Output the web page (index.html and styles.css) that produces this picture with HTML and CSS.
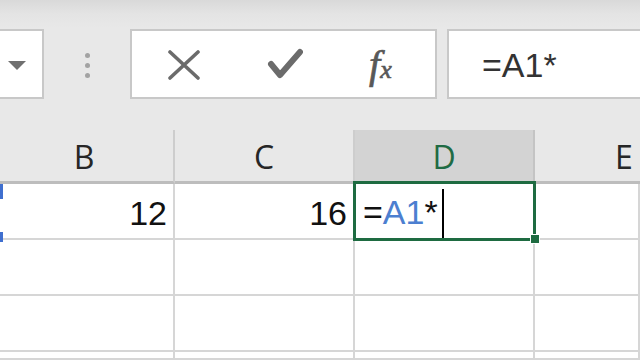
FILE: index.html
```html
<!DOCTYPE html>
<html>
<head>
<meta charset="utf-8">
<link rel="stylesheet" href="styles.css">
</head>
<body>
<div class="toolbar">
  <div class="namebox">
    <svg class="dd" width="18" height="10" viewBox="0 0 18 10"><polygon points="0,0 18,0 9,9" fill="#707070"/></svg>
  </div>
  <div class="grip"><span></span><span></span><span></span></div>
  <div class="fbtns">
    <svg class="ico" width="34" height="30" viewBox="0 0 34 30"><path d="M3 2 L31 28 M31 2 L3 28" stroke="#6b6b6b" stroke-width="3.6" stroke-linecap="round" fill="none"/></svg>
    <svg class="ico" width="36" height="32" viewBox="0 0 36 32"><path d="M4 16 L13 27 L33 4" stroke="#6b6b6b" stroke-width="6" stroke-linecap="round" stroke-linejoin="round" fill="none"/></svg>
    <span class="fx"><span class="f">f</span><span class="x">x</span></span>
  </div>
  <div class="finput">=A1*</div>
</div>
<div class="sheet">
  <div class="hdr">B</div>
  <div class="hdr">C</div>
  <div class="hdr active">D</div>
  <div class="hdr edge">E</div>

  <div class="cell num">12</div>
  <div class="cell num">16</div>
  <div class="cell edit"><span class="eq">=</span><span class="ref">A1</span><span class="eq">*</span><span class="caret"></span><span class="sel"><span class="handle"></span></span></div>
  <div class="cell"></div>

  <div class="cell"></div><div class="cell"></div><div class="cell"></div><div class="cell"></div>
  <div class="cell"></div><div class="cell"></div><div class="cell"></div><div class="cell"></div>
  <div class="cell"></div><div class="cell"></div><div class="cell"></div><div class="cell"></div>

  <div class="refmark"><span class="rm-top"></span><span class="rm-bot"></span></div>
</div>
</body>
</html>
```
FILE: styles.css
```css
html, body {
  margin: 0;
  padding: 0;
}
body {
  width: 640px;
  height: 360px;
  overflow: hidden;
  background: #ffffff;
  font-family: "Liberation Sans", Arial, sans-serif;
}
.toolbar {
  height: 130px;
  box-sizing: border-box;
  padding-top: 29px;
  display: flex;
  align-items: flex-start;
  overflow: hidden;
  background: linear-gradient(#d9d9d9 0px, #e4e4e4 14px, #e8e8e8 28px, #e8e8e8 100%);
}
.namebox {
  margin-left: -12px;
  width: 56px;
  height: 70px;
  box-sizing: border-box;
  border: 2px solid #c8c8c8;
  background: #fff;
  display: flex;
  align-items: center;
  padding-left: 18px;
  flex: none;
}
.dd {
  display: block;
  margin-top: 4px;
}
.grip {
  width: 86px;
  height: 70px;
  flex: none;
  display: flex;
  flex-direction: column;
  align-items: center;
  justify-content: center;
  gap: 5px;
  padding-top: 2px;
  box-sizing: border-box;
}
.grip span {
  width: 5px;
  height: 5px;
  border-radius: 50%;
  background: #a3a3a3;
}
.fbtns {
  width: 307px;
  height: 70px;
  flex: none;
  box-sizing: border-box;
  border: 2px solid #c8c8c8;
  background: #fff;
  display: flex;
  align-items: center;
  padding-left: 35px;
  gap: 66px;
}
.ico {
  display: block;
  flex: none;
}
.fbtns .ico:first-child {
  margin-top: 2px;
}
.fx {
  width: 36px;
  flex: none;
  font-family: "Liberation Serif", "Times New Roman", serif;
  font-style: italic;
  color: #585858;
  -webkit-text-stroke: 0.7px #585858;
  display: flex;
  align-items: baseline;
  line-height: 1;
  margin-top: 2px;
}
.fx .f {
  font-size: 40px;
}
.fx .x {
  font-size: 26px;
}
.finput {
  margin-left: 10px;
  flex: 1;
  height: 70px;
  box-sizing: border-box;
  border: 2px solid #c8c8c8;
  border-right: none;
  background: #fff;
  display: flex;
  align-items: center;
  padding-left: 33px;
  padding-top: 2px;
  font-size: 34px;
  color: #333;
}
.sheet {
  position: relative;
  margin-left: -5px;
  width: 645px;
  display: grid;
  grid-template-columns: 180px 180px 180px 1fr;
  grid-template-rows: 54px 56px 56px 56px 8px;
  overflow: hidden;
}
.hdr {
  background: #e8e8e8;
  box-sizing: border-box;
  border-right: 2px solid #cdcdcd;
  border-bottom: 3px solid #bdbdbd;
  display: flex;
  align-items: center;
  justify-content: center;
  font-family: "Open Sans", "Noto Sans", sans-serif;
  font-size: 32px;
  color: #262626;
  padding-top: 2px;
}
.hdr.edge {
  justify-content: flex-start;
  padding-left: 80px;
  border-right: none;
}
.hdr.active {
  background: #d3d3d3;
  color: #1f6b44;
  border-right-color: #c4c4c4;
}
.cell {
  box-sizing: border-box;
  border-right: 2px solid #d6d6d6;
  border-bottom: 2px solid #d6d6d6;
  display: flex;
  align-items: center;
  font-size: 34px;
  color: #111;
  padding-top: 5px;
}
.cell.num {
  justify-content: flex-end;
  padding-right: 6px;
}
.cell.edit {
  position: relative;
  padding-left: 8px;
  padding-top: 3px;
}
.eq {
  color: #111;
}
.ref {
  color: #4c7fd0;
}
.caret {
  display: inline-block;
  width: 2px;
  height: 50px;
  background: #000;
  margin-left: 4px;
  align-self: flex-end;
  margin-bottom: -1px;
}
.sel {
  position: absolute;
  left: -2px;
  top: -3px;
  right: -3px;
  bottom: -3px;
  border: 3px solid #1e6b41;
}
.handle {
  position: absolute;
  right: -7px;
  bottom: -6px;
  width: 8px;
  height: 8px;
  background: #1e6b41;
  border: 1px solid #fff;
}
.refmark {
  position: absolute;
  left: 5px;
  top: 54px;
  width: 3px;
  height: 58px;
}
.rm-top {
  position: absolute;
  left: 0;
  top: 0;
  width: 3px;
  height: 15px;
  background: #3f6fcf;
}
.rm-bot {
  position: absolute;
  left: 0;
  bottom: 0;
  width: 3px;
  height: 10px;
  background: #3f6fcf;
}
```
